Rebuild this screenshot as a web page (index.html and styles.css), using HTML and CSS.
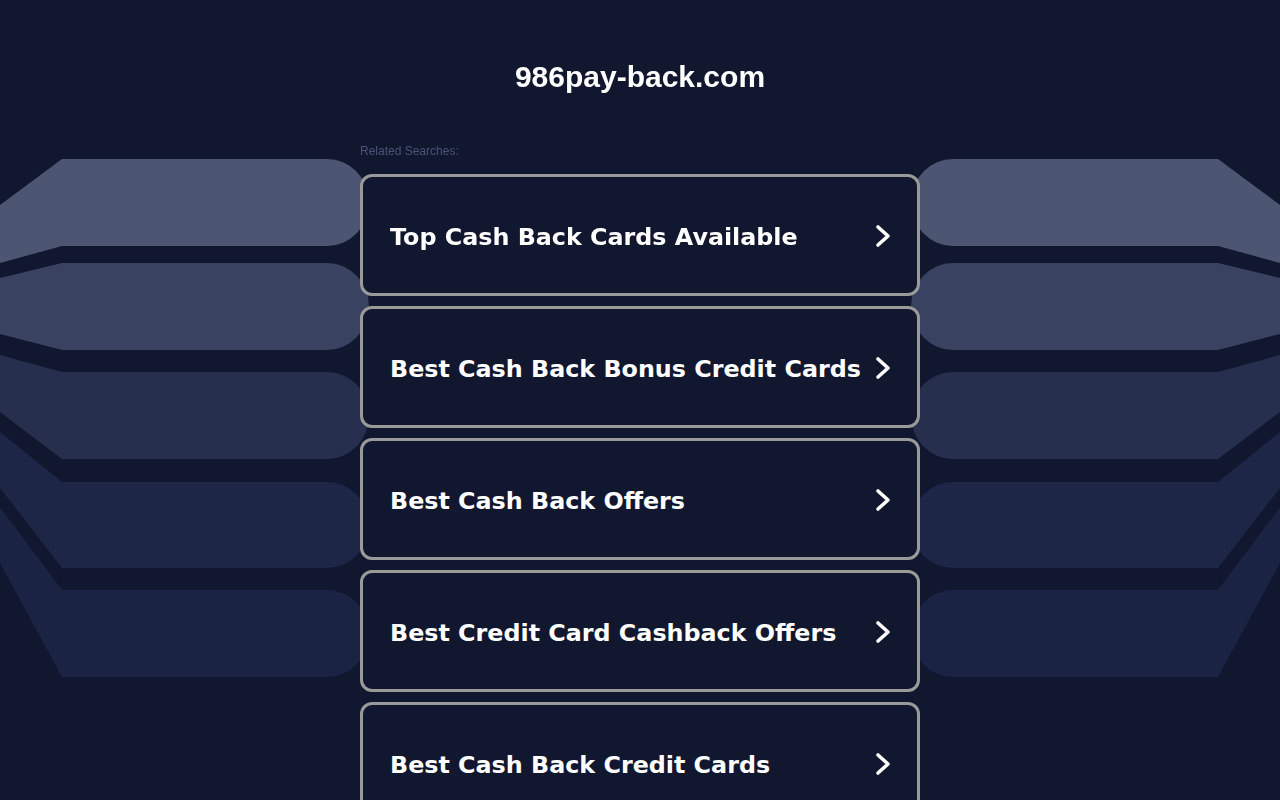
FILE: index.html
```html
<!DOCTYPE html>
<html lang="en">
<head>
<meta charset="utf-8">
<title>986pay-back.com</title>
<link rel="stylesheet" href="styles.css">
</head>
<body>
<svg class="backdrop" width="1280" height="800" viewBox="0 0 1280 800" aria-hidden="true">
  <defs>
    <pattern id="dots" width="4" height="4" patternUnits="userSpaceOnUse">
      <rect x="0" y="0" width="1" height="1" fill="#151c38"/>
      <rect x="2" y="2" width="1" height="1" fill="#25305a"/>
    </pattern>
    <g id="bands">
      <path d="M62,159 L327,159 A42,43.5 0 0 1 327,246 L62,246 L0,263 L0,205 Z" fill="#4c5571"/>
      <path d="M62,263 L327,263 A42,43.5 0 0 1 327,350 L62,350 L0,334 L0,278 Z" fill="#3a4261"/>
      <path d="M62,372 L327,372 A42,43.5 0 0 1 327,459 L62,459 L0,412 L0,355 Z" fill="#262f4e"/>
      <path d="M62,482 L327,482 A42,43 0 0 1 327,568 L62,568 L0,488 L0,432 Z" fill="#1d2647"/>
      <path d="M62,482 L327,482 A42,43 0 0 1 327,568 L62,568 L0,488 L0,432 Z" fill="url(#dots)" opacity="0.35"/>
      <path d="M62,590 L327,590 A42,43.5 0 0 1 327,677 L62,677 L0,563 L0,507 Z" fill="#1b2344"/>
      <path d="M62,590 L327,590 A42,43.5 0 0 1 327,677 L62,677 L0,563 L0,507 Z" fill="url(#dots)" opacity="0.45"/>
    </g>
  </defs>
  <use href="#bands"/>
  <use href="#bands" transform="translate(1280,0) scale(-1,1)"/>
</svg>

<header class="header">
  <h1 class="domain">986pay-back.com</h1>
</header>

<main class="searches">
  <p class="label">Related Searches:</p>
  <ul class="list">
    <li><a class="card" href="#"><span class="card-text">Top Cash Back Cards Available</span><svg class="chev" viewBox="0 0 16 24" width="16" height="24"><polyline points="3,3 13,12 3,21"/></svg></a></li>
    <li><a class="card" href="#"><span class="card-text">Best Cash Back Bonus Credit Cards</span><svg class="chev" viewBox="0 0 16 24" width="16" height="24"><polyline points="3,3 13,12 3,21"/></svg></a></li>
    <li><a class="card" href="#"><span class="card-text">Best Cash Back Offers</span><svg class="chev" viewBox="0 0 16 24" width="16" height="24"><polyline points="3,3 13,12 3,21"/></svg></a></li>
    <li><a class="card" href="#"><span class="card-text">Best Credit Card Cashback Offers</span><svg class="chev" viewBox="0 0 16 24" width="16" height="24"><polyline points="3,3 13,12 3,21"/></svg></a></li>
    <li><a class="card" href="#"><span class="card-text">Best Cash Back Credit Cards</span><svg class="chev" viewBox="0 0 16 24" width="16" height="24"><polyline points="3,3 13,12 3,21"/></svg></a></li>
  </ul>
</main>
</body>
</html>
```

FILE: styles.css
```css
html, body {
  margin: 0;
  padding: 0;
  background: #11172e;
  height: 100%;
  overflow: hidden;
}

body {
  font-family: "Liberation Sans", Arial, sans-serif;
  color: #ffffff;
}

.backdrop {
  position: fixed;
  left: 0;
  top: 0;
  z-index: 0;
}

.header {
  position: relative;
  z-index: 1;
  padding-top: 59px;
  display: flex;
  justify-content: center;
}

.domain {
  margin: 0;
  font-family: "Liberation Sans", Arial, sans-serif;
  font-weight: bold;
  font-size: 30px;
  line-height: 36px;
  color: #ffffff;
}

.searches {
  position: relative;
  z-index: 1;
  width: 560px;
  margin: 0 auto;
  padding-top: 49px;
}

.label {
  margin: 0 0 16px 0;
  font-size: 12px;
  line-height: 14px;
  color: #4b5476;
}

.list {
  list-style: none;
  margin: 0;
  padding: 0;
  display: flex;
  flex-direction: column;
  gap: 10px;
}

.card {
  box-sizing: border-box;
  height: 122px;
  display: flex;
  align-items: center;
  justify-content: space-between;
  padding: 2px 26px 0 27px;
  border: 3px solid #9a9a9a;
  border-radius: 12px;
  background: #11172e;
  text-decoration: none;
  color: #ffffff;
}

.card-text {
  font-family: "DejaVu Sans", Verdana, sans-serif;
  font-weight: bold;
  font-size: 23.8px;
  line-height: 30px;
  padding-top: 2px;
  white-space: nowrap;
}

.chev {
  flex: none;
}

.chev polyline {
  fill: none;
  stroke: #ffffff;
  stroke-width: 3.6;
  stroke-linecap: round;
  stroke-linejoin: round;
}
```
